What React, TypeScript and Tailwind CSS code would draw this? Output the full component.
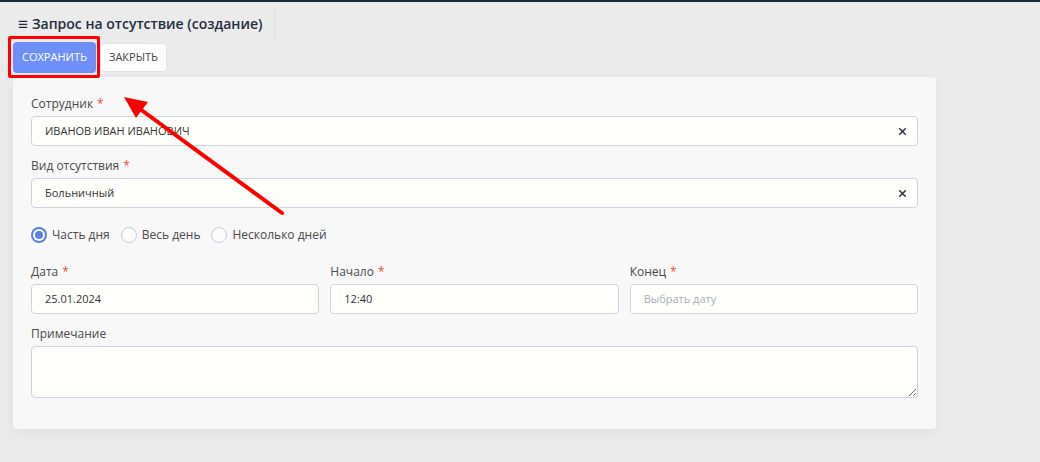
import React from "react";
import { X } from "lucide-react";

const Label: React.FC<{ text: string; required?: boolean }> = ({ text, required }) => (
  <div className="text-[12px] leading-4 text-[#4a4a4a] mb-1">
    {text}
    {required && <span className="text-[#ef4b2f] ml-1">*</span>}
  </div>
);

const SelectField: React.FC<{ value: string }> = ({ value }) => (
  <div className="h-[30px] w-full flex items-center justify-between border border-[#cfd5de] rounded bg-[#fffffc] pl-[13px] pr-[9px]">
    <span className="text-[11px] text-[#333]">{value}</span>
    <X size={11} strokeWidth={3.5} className="text-[#333a44]" />
  </div>
);

const TextField: React.FC<{ value?: string; placeholder?: string }> = ({ value, placeholder }) => (
  <div className="h-[30px] w-full flex items-center border border-[#cfd5de] rounded bg-[#fffffc] pl-[13px]">
    {value ? (
      <span className="text-[11px] text-[#333]">{value}</span>
    ) : (
      <span className="text-[11px] text-[#a9adb5]">{placeholder}</span>
    )}
  </div>
);

const Radio: React.FC<{ label: string; checked?: boolean }> = ({ label, checked }) => (
  <label className="flex items-center gap-[5px] mr-[11px]">
    {checked ? (
      <span className="w-4 h-4 rounded-full bg-[#5b7fe9] flex items-center justify-center">
        <span className="w-[12px] h-[12px] rounded-full bg-white flex items-center justify-center">
          <span className="w-[8px] h-[8px] rounded-full bg-[#5b7fe9]" />
        </span>
      </span>
    ) : (
      <span className="w-4 h-4 rounded-full border border-[#c5cde0] bg-[#fbfbfb]" />
    )}
    <span className="text-[12px] text-[#4a4a4a]">{label}</span>
  </label>
);

export default function App() {
  return (
    <div
      className="relative w-[1040px] h-[462px] bg-[#ebebeb] overflow-hidden"
      style={{ fontFamily: '"Open Sans", "Noto Sans", sans-serif' }}
    >
      <div className="h-[2px] bg-[#1c2b3b]" />

      <div className="px-[13px]">
        <div className="flex">
          <div className="h-[31px] mt-[6px] pl-[5px] pr-[12px] flex items-center border-r border-[#e0e0e0] text-[14px] font-semibold text-[#1f2d3d]">
            <span className="mr-[4px] text-[17px] leading-none font-normal">≡</span>
            Запрос на отсутствие (создание)
          </div>
        </div>

        <div className="flex items-center gap-1 mt-[3px] h-[31px]">
          <button className="h-[31px] w-[83px] rounded bg-[#6e8ff8] text-white text-[11px]">
            СОХРАНИТЬ
          </button>
          <button className="h-[29px] w-[67px] rounded bg-white border border-[#e2e2e2] text-[#444] text-[11px]">
            ЗАКРЫТЬ
          </button>
        </div>

        <div className="mt-[4px] w-[923px] h-[352px] rounded bg-[#f8f8f8] shadow-[0_4px_12px_rgba(0,0,0,0.05)] px-[18px] pt-[19px]">
          <Label text="Сотрудник" required />
          <SelectField value="ИВАНОВ ИВАН ИВАНОВИЧ" />

          <div className="mt-[12px]">
            <Label text="Вид отсутствия" required />
            <SelectField value="Больничный" />
          </div>

          <div className="flex items-center mt-[18px]">
            <Radio label="Часть дня" checked />
            <Radio label="Весь день" />
            <Radio label="Несколько дней" />
          </div>

          <div className="grid grid-cols-3 gap-[11px] mt-[20px]">
            <div>
              <Label text="Дата" required />
              <TextField value="25.01.2024" />
            </div>
            <div>
              <Label text="Начало" required />
              <TextField value="12:40" />
            </div>
            <div>
              <Label text="Конец" required />
              <TextField placeholder="Выбрать дату" />
            </div>
          </div>

          <div className="mt-[12px]">
            <Label text="Примечание" />
            <textarea className="block w-full h-[52px] border border-[#cfd5de] rounded bg-[#fffffc] outline-none" />
          </div>
        </div>
      </div>

      {/* annotation overlay */}
      <div className="absolute left-[8px] top-[36px] w-[92px] h-[42px] border-[3px] border-[#f00] rounded-[2px] pointer-events-none" />
      <svg className="absolute left-0 top-0 pointer-events-none" width="1040" height="462">
        <line x1="282" y1="213" x2="140" y2="109" stroke="#f00" strokeWidth="4" strokeLinecap="round" />
        <polygon points="124,97 148,102 136,118" fill="#f00" />
      </svg>
    </div>
  );
}
